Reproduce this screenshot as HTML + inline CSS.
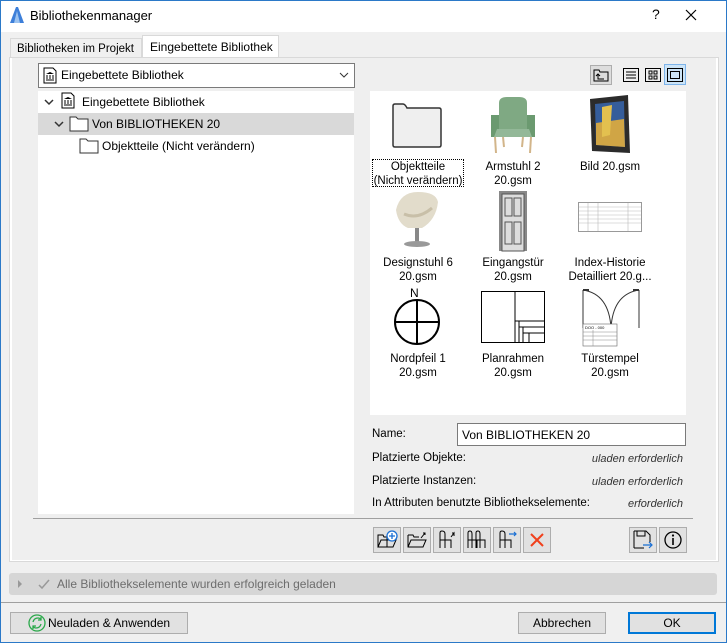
<!DOCTYPE html>
<html><head><meta charset="utf-8"><style>
*{box-sizing:border-box}
body{margin:0;width:727px;height:643px;overflow:hidden;font-family:"Liberation Sans",sans-serif;font-size:12px;color:#000;background:#f0f0f0;position:relative}
.a{position:absolute}
.win{left:0;top:0;width:727px;height:643px;border:1px solid #2b79c8}
.title{left:1px;top:1px;width:725px;height:31px;background:#fff}
.btn{position:absolute;background:#e1e1e1;border:1px solid #adadad;text-align:center;line-height:20px;font-size:12px}
.tb{position:absolute;width:28px;height:26px;background:#e1e1e1;border:1px solid #adadad}
.cap{position:absolute;width:96px;text-align:center;font-size:11.5px;line-height:14px}
.lbl{position:absolute;font-size:11.5px}
.it{position:absolute;font-size:11px;font-style:italic;color:#333;text-align:right}
</style></head><body>
<div class="a win"></div>
<div class="a title"></div>
<svg class="a" style="left:9px;top:6px" width="16" height="18"><path d="M1 17 L7 1 L9 1 L15 17 Z" fill="#3d7fd9"/><path d="M5 17 L8 5 L11 17Z" fill="#9cc3f0"/></svg>
<div class="a" style="left:30px;top:8px;font-size:13px">Bibliothekenmanager</div>
<div class="a" style="left:652px;top:6px;font-size:14px">?</div>
<svg class="a" style="left:685px;top:9px" width="12" height="12"><path d="M1 1L11 11M11 1L1 11" stroke="#000" stroke-width="1.2"/></svg>

<!-- tabs -->
<div class="a" style="left:10px;top:38px;width:132px;height:20px;border:1px solid #d9d9d9;border-bottom:none;background:#f0f0f0;font-size:11.5px;padding:4px 0 0 6px;white-space:nowrap;overflow:hidden">Bibliotheken im Projekt</div>
<div class="a" style="left:142px;top:35px;width:137px;height:23px;border:1px solid #d9d9d9;border-bottom:none;background:#fff;font-size:12px;padding:4px 0 0 7px;white-space:nowrap">Eingebettete Bibliothek</div>
<div class="a" style="left:9px;top:57px;width:710px;height:505px;border:1px solid #d9d9d9;background:#fff"></div>
<div class="a" style="left:12px;top:58px;width:704px;height:502px;background:#efefef"></div>

<!-- dropdown -->
<div class="a" style="left:38px;top:63px;width:317px;height:25px;background:#fff;border:1px solid #7a7a7a"></div>
<svg class="a" style="left:43px;top:67px" width="14" height="17"><path d="M1 1H10L13 4V16H1Z" fill="#fff" stroke="#000"/><path d="M3 7L7 5L11 7ZM3.5 8h1v4h-1zM6.5 8h1v4h-1zM9.5 8h1v4h-1zM3 12.5h8v1H3z" fill="#000"/></svg>
<div class="a" style="left:61px;top:68px;font-size:12px">Eingebettete Bibliothek</div>
<svg class="a" style="left:339px;top:72px" width="10" height="6"><path d="M1 1L5 5L9 1" stroke="#333" fill="none"/></svg>

<!-- tree -->
<div class="a" style="left:38px;top:91px;width:316px;height:423px;background:#fff"></div>
<div class="a" style="left:38px;top:113px;width:316px;height:22px;background:#d9d9d9"></div>
<svg class="a" style="left:44px;top:98px" width="10" height="8"><path d="M1 2L5 6L9 2" stroke="#333" fill="none" stroke-width="1.5"/></svg>
<svg class="a" style="left:61px;top:92px" width="14" height="17"><path d="M1 1H10L13 4V16H1Z" fill="#fff" stroke="#000"/><path d="M3 7L7 5L11 7ZM3.5 8h1v4h-1zM6.5 8h1v4h-1zM9.5 8h1v4h-1zM3 12.5h8v1H3z" fill="#000"/></svg>
<div class="a" style="left:82px;top:95px;font-size:12px">Eingebettete Bibliothek</div>
<svg class="a" style="left:54px;top:120px" width="10" height="8"><path d="M1 2L5 6L9 2" stroke="#333" fill="none" stroke-width="1.5"/></svg>
<svg class="a" style="left:69px;top:115px" width="20" height="17"><path d="M1 2H7L9 4H19V16H1Z" fill="#fff" stroke="#333"/></svg>
<div class="a" style="left:92px;top:117px;font-size:12px">Von BIBLIOTHEKEN 20</div>
<svg class="a" style="left:79px;top:137px" width="20" height="17"><path d="M1 2H7L9 4H19V16H1Z" fill="#fff" stroke="#333"/></svg>
<div class="a" style="left:102px;top:139px;font-size:12px">Objektteile (Nicht verändern)</div>

<!-- view buttons -->
<div class="a" style="left:590px;top:65px;width:22px;height:20px;background:#ddd;border:1px solid #adadad"></div>
<svg class="a" style="left:593px;top:68px" width="16" height="14"><path d="M1 2H6L7 4H15V13H1Z" fill="none" stroke="#000"/><path d="M5 6V11H11M3 8L5 6L7 8" fill="none" stroke="#000"/></svg>
<svg class="a" style="left:623px;top:68px" width="16" height="14"><rect x=".5" y=".5" width="15" height="13" fill="none" stroke="#000"/><path d="M3 4h10M3 7h10M3 10h10" stroke="#000"/></svg>
<svg class="a" style="left:645px;top:68px" width="16" height="14"><rect x=".5" y=".5" width="15" height="13" fill="none" stroke="#000"/><rect x="4" y="3" width="3" height="3" fill="none" stroke="#000"/><rect x="9" y="3" width="3" height="3" fill="none" stroke="#000"/><rect x="4" y="8" width="3" height="3" fill="none" stroke="#000"/><rect x="9" y="8" width="3" height="3" fill="none" stroke="#000"/></svg>
<div class="a" style="left:664px;top:64px;width:22px;height:21px;background:#cce4f7;border:1px solid #7eb4ea"></div>
<svg class="a" style="left:667px;top:68px" width="16" height="14"><rect x=".5" y=".5" width="15" height="13" fill="none" stroke="#000"/><rect x="3.5" y="3.5" width="9" height="7" fill="none" stroke="#000"/></svg>

<!-- grid -->
<div class="a" style="left:370px;top:91px;width:316px;height:324px;background:#fff"></div>
<svg class="a" style="left:391px;top:103px" width="52" height="46"><path d="M2 3Q2 1 4 1H12Q14 1 16 5H48Q50 5 50 7V42Q50 44 48 44H4Q2 44 2 42Z" fill="#efefef" stroke="#333" stroke-width="1.5"/></svg>
<div class="a" style="left:372px;top:159px;width:92px;height:28px;border:1px dotted #000"></div>
<div class="cap" style="left:370px;top:160px">Objektteile<br>(Nicht verändern)</div>
<svg class="a" style="left:487px;top:95px" width="50" height="60"><path d="M12 8Q12 2 20 2H32Q40 2 40 8V34H12Z" fill="#7fa983"/><path d="M4 20H12V42H4ZM40 20H48V42H40Z" fill="#6b9a70"/><path d="M10 34H42L45 42H7Z" fill="#93b898"/><path d="M8 42L9 58M44 42L43 58M16 42L17 52M36 42L35 52" stroke="#d2b58a" stroke-width="2"/></svg>
<div class="cap" style="left:465px;top:160px">Armstuhl 2<br>20.gsm</div>
<svg class="a" style="left:588px;top:95px" width="46" height="60"><path d="M2 4L40 0L42 58L4 56Z" fill="#2b2b2b"/><path d="M7 9L36 6L37 52L8 50Z" fill="#355d9b"/><path d="M8 28L36 24L37 52L8 50Z" fill="#d0a545"/><path d="M14 12L24 10L22 40L14 42Z" fill="#e3c04f"/></svg>
<div class="cap" style="left:562px;top:160px">Bild 20.gsm</div>

<svg class="a" style="left:392px;top:190px" width="50" height="62"><path d="M4 20Q8 2 26 2Q44 2 46 12Q44 30 30 38H16Q6 34 4 20Z" fill="#e2dccb"/><path d="M12 24Q26 30 40 18" stroke="#c8bfa8" fill="none" stroke-width="3"/><path d="M23 38H27V52H23Z" fill="#888"/><ellipse cx="25" cy="54" rx="13" ry="3" fill="#999"/></svg>
<div class="cap" style="left:370px;top:256px">Designstuhl 6<br>20.gsm</div>
<svg class="a" style="left:497px;top:190px" width="32" height="62"><rect x="2" y="1" width="28" height="60" fill="#888"/><rect x="5" y="4" width="22" height="57" fill="#ddd" stroke="#555"/><rect x="8" y="8" width="7" height="18" fill="none" stroke="#555"/><rect x="17" y="8" width="7" height="18" fill="none" stroke="#555"/><rect x="8" y="32" width="7" height="22" fill="none" stroke="#555"/><rect x="17" y="32" width="7" height="22" fill="none" stroke="#555"/></svg>
<div class="cap" style="left:465px;top:256px">Eingangstür<br>20.gsm</div>
<svg class="a" style="left:578px;top:202px" width="64" height="30"><rect x=".5" y=".5" width="63" height="29" fill="#fff" stroke="#999"/><path d="M1 5H63M1 9H63M1 13H63M1 17H63M1 21H63M10 1V29M20 1V29M50 1V29" stroke="#bbb" stroke-width=".6"/></svg>
<div class="cap" style="left:562px;top:256px">Index-Historie<br>Detailliert 20.g...</div>

<div class="a" style="left:410px;top:286px;font-size:12px">N</div>
<svg class="a" style="left:393px;top:298px" width="48" height="48"><circle cx="24" cy="24" r="22" fill="none" stroke="#000" stroke-width="2"/><path d="M24 2V46M2 24H46" stroke="#000" stroke-width="2"/></svg>
<div class="cap" style="left:370px;top:352px">Nordpfeil 1<br>20.gsm</div>
<svg class="a" style="left:481px;top:291px" width="64" height="52"><rect x=".5" y=".5" width="63" height="51" fill="#fff" stroke="#000"/><path d="M34 1V51M34 30H63M38 30V51M38 36H63M42 36V51M42 42H63M48 42V51" stroke="#000"/></svg>
<div class="cap" style="left:465px;top:352px">Planrahmen<br>20.gsm</div>
<svg class="a" style="left:579px;top:288px" width="64" height="60"><path d="M4 40V2M60 40V2M4 2Q30 6 32 40M60 2Q34 6 32 40" fill="none" stroke="#333"/><path d="M4 2H10M54 2H60" stroke="#333" stroke-width="2"/><rect x="4" y="36" width="34" height="22" fill="#fff" stroke="#666" stroke-width=".6"/><text x="6" y="41" font-size="4" font-family="Liberation Sans">DOO - 000</text><path d="M4 44H38M4 48H38M4 52H38M14 42V58" stroke="#888" stroke-width=".5"/></svg>
<div class="cap" style="left:562px;top:352px">Türstempel<br>20.gsm</div>

<!-- info -->
<div class="lbl" style="left:372px;top:428px">Name:</div>
<div class="a" style="left:457px;top:423px;width:229px;height:23px;background:#fff;border:1px solid #7a7a7a;font-size:12px;padding:4px 0 0 4px">Von BIBLIOTHEKEN 20</div>
<div class="lbl" style="left:372px;top:452px">Platzierte Objekte:</div>
<div class="it" style="left:560px;top:453px;width:123px">uladen erforderlich</div>
<div class="lbl" style="left:372px;top:475px">Platzierte Instanzen:</div>
<div class="it" style="left:560px;top:476px;width:123px">uladen erforderlich</div>
<div class="lbl" style="left:372px;top:497px">In Attributen benutzte Bibliothekselemente:</div>
<div class="it" style="left:600px;top:498px;width:83px">erforderlich</div>

<div class="a" style="left:33px;top:518px;width:660px;height:1px;background:#a0a0a0"></div>

<!-- toolbar -->
<div class="tb" style="left:373px;top:527px"></div>
<svg class="a" style="left:377px;top:530px" width="22" height="20"><path d="M1 5H6L7 7H10V17H1Z M1 17L4 10H19L16 17Z" fill="none" stroke="#000"/><circle cx="15" cy="6" r="5" fill="#fff" stroke="#1a6fd4" stroke-width="1.3"/><path d="M15 3V9M12 6H18" stroke="#1a6fd4" stroke-width="1.3"/></svg>
<div class="tb" style="left:403px;top:527px"></div>
<svg class="a" style="left:407px;top:530px" width="22" height="20"><path d="M1 5H6L7 7H12M1 5V17H16L19 10H4L1 17" fill="none" stroke="#000"/><path d="M14 8L18 3M16 3H18V5" fill="none" stroke="#000"/></svg>
<div class="tb" style="left:433px;top:527px"></div>
<svg class="a" style="left:437px;top:530px" width="22" height="20"><path d="M3 18V3Q3 1 5 1Q8 1 8 4V10H14V18M3 10H14M8 10V18" fill="none" stroke="#000"/><path d="M14 7L17 3V6M17 3H15" fill="none" stroke="#000"/></svg>
<div class="tb" style="left:463px;top:527px"></div>
<svg class="a" style="left:466px;top:530px" width="22" height="20"><path d="M2 18V3Q2 1 4 1Q6 1 6 4V10H11V18M2 10H11M6 10V18" fill="none" stroke="#000"/><path d="M10 18V3Q10 1 12 1Q14 1 14 4V10H19V18M10 10H19M14 10V18" fill="none" stroke="#000"/></svg>
<div class="tb" style="left:493px;top:527px"></div>
<svg class="a" style="left:497px;top:530px" width="22" height="20"><path d="M3 18V3Q3 1 5 1Q8 1 8 4V10H14V18M3 10H14M8 10V18" fill="none" stroke="#000"/><path d="M12 4H19M17 2L19 4L17 6" fill="none" stroke="#1a6fd4" stroke-width="1.2"/></svg>
<div class="tb" style="left:523px;top:527px"></div>
<svg class="a" style="left:530px;top:533px" width="14" height="14"><path d="M1 1L13 13M13 1L1 13" stroke="#f0401c" stroke-width="2"/></svg>
<div class="tb" style="left:629px;top:527px"></div>
<svg class="a" style="left:633px;top:530px" width="22" height="20"><path d="M1 1H13L17 5V12M11 18H1Z M1 1V18" fill="none" stroke="#000"/><rect x="4" y="1" width="8" height="5" fill="none" stroke="#000"/><path d="M10 15H19M16 12L19 15L16 18" fill="none" stroke="#1a6fd4" stroke-width="1.2"/></svg>
<div class="tb" style="left:659px;top:527px"></div>
<svg class="a" style="left:664px;top:531px" width="18" height="18"><circle cx="9" cy="9" r="8" fill="none" stroke="#000" stroke-width="1.3"/><path d="M9 7V14" stroke="#000" stroke-width="1.6"/><circle cx="9" cy="4.5" r="1.1" fill="#000"/></svg>

<!-- status -->
<div class="a" style="left:9px;top:573px;width:708px;height:22px;background:#d6d6d6;border-radius:3px"></div>
<svg class="a" style="left:17px;top:580px" width="6" height="8"><path d="M1 0L5 4L1 8Z" fill="#999"/></svg>
<svg class="a" style="left:38px;top:578px" width="12" height="12"><path d="M1 7L4 10L11 2" stroke="#999" fill="none" stroke-width="1.5"/></svg>
<div class="a" style="left:57px;top:577px;font-size:12px;color:#6d6d6d">Alle Bibliothekselemente wurden erfolgreich geladen</div>
<div class="a" style="left:1px;top:602px;width:725px;height:1px;background:#a0a0a0"></div>

<!-- bottom buttons -->
<div class="btn" style="left:10px;top:612px;width:178px;height:22px"></div>
<svg class="a" style="left:28px;top:614px" width="18" height="18"><circle cx="9" cy="9" r="8" fill="none" stroke="#2aa84a" stroke-width="1.3"/><path d="M5 8Q6 4 10 4Q12 4 13 6M13 3V6H10M13 10Q12 14 8 14Q6 14 5 12M5 15V12H8" fill="none" stroke="#2aa84a" stroke-width="1.3"/></svg>
<div class="a" style="left:48px;top:616px;font-size:12px">Neuladen &amp; Anwenden</div>
<div class="btn" style="left:518px;top:612px;width:88px;height:22px">Abbrechen</div>
<div class="btn" style="left:628px;top:612px;width:88px;height:22px;border:2px solid #0078d7;line-height:18px">OK</div>
</body></html>
